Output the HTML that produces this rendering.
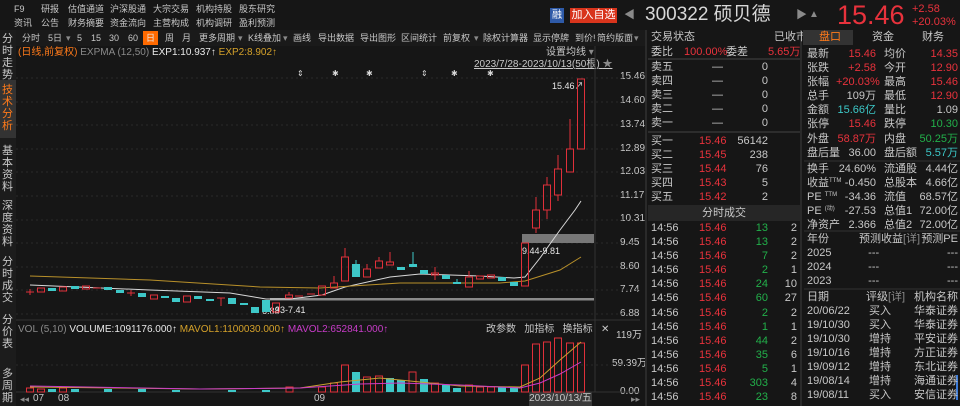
<!DOCTYPE html>
<html><head><meta charset="utf-8"><style>
*{margin:0;padding:0;box-sizing:border-box}
body{width:960px;height:406px;background:#161616;overflow:hidden;position:relative;font-family:"Liberation Sans","Noto Sans CJK SC",sans-serif;font-size:11px;color:#c8c8c8}
.a{position:absolute;white-space:nowrap;line-height:14px}
.t{position:absolute;white-space:nowrap;font-size:9px;line-height:14px;top:31px}
.h{position:absolute;white-space:nowrap;font-size:9px;line-height:12px}
.r{color:#e8323c}.g{color:#22b04a}.c{color:#3cc8c8}.o{color:#ff7a1a}.w{color:#e8e8e8}.y{color:#d4a12a}.m{color:#c83cc8}.d{color:#8a8a8a}
.rt{text-align:right}
sup{font-size:6px;line-height:0;vertical-align:4px}
</style></head><body>
<div class="h" style="left:14px;top:3px">F9</div>
<div class="h" style="left:41px;top:3px">研报</div><div class="h" style="left:68px;top:3px">估值通道</div><div class="h" style="left:110px;top:3px">沪深股通</div><div class="h" style="left:153px;top:3px">大宗交易</div><div class="h" style="left:196px;top:3px">机构持股</div><div class="h" style="left:239px;top:3px">股东研究</div>
<div class="h" style="left:14px;top:17px">资讯</div><div class="h" style="left:41px;top:17px">公告</div><div class="h" style="left:68px;top:17px">财务摘要</div><div class="h" style="left:110px;top:17px">资金流向</div><div class="h" style="left:153px;top:17px">主营构成</div><div class="h" style="left:196px;top:17px">机构调研</div><div class="h" style="left:239px;top:17px">盈利预测</div>
<div class="a" style="left:550px;top:8px;width:14px;height:15px;background:#2e5aa8;color:#fff;font-size:10px;text-align:center;line-height:15px">融</div>
<div class="a" style="left:570px;top:8px;width:47px;height:15px;background:#d8341c;color:#fff;font-size:11px;text-align:center;line-height:15px">加入自选</div>
<div class="a d" style="left:624px;top:8px;font-size:11px">◀</div>
<div class="a" style="left:645px;top:4px;font-size:19px;line-height:22px;color:#d8d8d8">300322 硕贝德</div>
<div class="a d" style="left:796px;top:8px;font-size:11px">▶</div>
<div class="a d" style="left:809px;top:8px;font-size:10px">▲</div>
<div class="a r" style="left:837px;top:0px;font-size:27px;line-height:30px">15.46</div>
<div class="a r" style="left:912px;top:2px;font-size:11px">+2.58</div>
<div class="a r" style="left:912px;top:15px;font-size:11px">+20.03%</div>
<div class="a" style="left:0;top:30px;width:16px;height:376px;background:#1c1c1c"></div>
<div class="a" style="left:2px;top:33px;width:13px;font-size:11px;line-height:12px;white-space:normal">分时走势</div>
<div class="a" style="left:0;top:80px;width:16px;height:58px;background:#333"></div>
<div class="a o" style="left:2px;top:84px;width:13px;font-size:11px;line-height:12px;white-space:normal">技术分析</div>
<div class="a" style="left:2px;top:145px;width:13px;font-size:11px;line-height:12px;white-space:normal">基本资料</div>
<div class="a" style="left:2px;top:200px;width:13px;font-size:11px;line-height:12px;white-space:normal">深度资料</div>
<div class="a" style="left:2px;top:256px;width:13px;font-size:11px;line-height:12px;white-space:normal">分时成交</div>
<div class="a" style="left:2px;top:314px;width:13px;font-size:11px;line-height:12px;white-space:normal">分价表</div>
<div class="a" style="left:2px;top:368px;width:13px;font-size:11px;line-height:12px;white-space:normal">多周期</div>
<div class="a" style="left:16px;top:30px;width:630px;height:16px;background:#1a1a1a"></div>
<div class="a" style="left:143px;top:31px;width:15px;height:14px;background:#ff6a00"></div>
<div class="t" style="left:22px">分时</div><div class="t" style="left:48px">5日</div><div class="t d" style="left:66px">▾</div><div class="t" style="left:77px">5</div><div class="t" style="left:91px">15</div><div class="t" style="left:109px">30</div><div class="t" style="left:128px">60</div><div class="t w" style="left:146px">日</div><div class="t" style="left:165px">周</div><div class="t" style="left:182px">月</div><div class="t" style="left:199px">更多周期</div><div class="t d" style="left:238px">▾</div><div class="t" style="left:248px">K线叠加</div><div class="t d" style="left:283px">▾</div><div class="t" style="left:293px">画线</div><div class="t" style="left:318px">导出数据</div><div class="t" style="left:360px">导出图形</div><div class="t" style="left:401px">区间统计</div><div class="t" style="left:443px">前复权</div><div class="t d" style="left:474px">▾</div><div class="t" style="left:483px">除权计算器</div><div class="t" style="left:533px">显示停牌</div><div class="t" style="left:575px">到价!</div><div class="t" style="left:597px">简约版面</div><div class="t d" style="left:634px">▾</div>
<div class="a" style="left:18px;top:46px;font-size:10px"><span class="o">(日线,前复权)</span> <span class="d">EXPMA (12,50)</span> <span class="w">EXP1:10.937↑</span> <span class="y">EXP2:8.902↑</span></div>
<div class="a" style="left:546px;top:46px;font-size:10px">设置均线 <span class="d">▾</span></div>
<div class="a" style="left:474px;top:58px;font-size:10px;text-decoration:underline">2023/7/28-2023/10/13(50根) <span class="d">★</span></div>
<div class="a w" style="left:552px;top:79px;font-size:9px">15.46↗</div>
<div class="a w" style="left:522px;top:244px;font-size:9px">9.44-9.81</div>
<div class="a w" style="left:262px;top:304px;font-size:9px">6.88</div>
<div class="a w" style="left:275px;top:303px;font-size:9px">33-7.41</div>
<div class="a" style="left:620px;top:71px;font-size:10px;line-height:12px">15.46</div>
<div class="a" style="left:620px;top:95px;font-size:10px;line-height:12px">14.60</div>
<div class="a" style="left:620px;top:119px;font-size:10px;line-height:12px">13.74</div>
<div class="a" style="left:620px;top:143px;font-size:10px;line-height:12px">12.89</div>
<div class="a" style="left:620px;top:166px;font-size:10px;line-height:12px">12.03</div>
<div class="a" style="left:620px;top:190px;font-size:10px;line-height:12px">11.17</div>
<div class="a" style="left:620px;top:213px;font-size:10px;line-height:12px">10.31</div>
<div class="a" style="left:620px;top:237px;font-size:10px;line-height:12px">9.45</div>
<div class="a" style="left:620px;top:261px;font-size:10px;line-height:12px">8.60</div>
<div class="a" style="left:620px;top:284px;font-size:10px;line-height:12px">7.74</div>
<div class="a" style="left:620px;top:308px;font-size:10px;line-height:12px">6.88</div>
<div class="a" style="left:616px;top:330px;font-size:10px;line-height:12px">119万</div>
<div class="a" style="left:612px;top:358px;font-size:10px;line-height:12px">59.39万</div>
<div class="a" style="left:620px;top:386px;font-size:10px;line-height:12px">0.00</div>
<div class="a" style="left:18px;top:323px;font-size:10px"><span class="d">VOL (5,10)</span> <span class="w">VOLUME:1091176.000↑</span> <span class="y">MAVOL1:1100030.000↑</span> <span class="m">MAVOL2:652841.000↑</span></div>
<div class="a" style="left:486px;top:323px;font-size:10px">改参数&nbsp;&nbsp;&nbsp;加指标&nbsp;&nbsp;&nbsp;换指标&nbsp;&nbsp;&nbsp;✕</div>
<div class="a d" style="left:20px;top:392px;font-size:9px">◂◂</div>
<div class="a" style="left:33px;top:392px;font-size:10px">07&nbsp;&nbsp;&nbsp;&nbsp;&nbsp;08</div>
<div class="a" style="left:314px;top:392px;font-size:10px">09</div>
<div class="a" style="left:529px;top:392px;width:63px;height:14px;background:#3a3a3a;font-size:10px;text-align:center">2023/10/13/五</div>
<div class="a d" style="left:631px;top:392px;font-size:9px">▸▸</div>
<svg class="a" style="left:0;top:0" width="960" height="406">
<g stroke="#2a2a2a" stroke-dasharray="2,3" stroke-width="1">
<line x1="16" y1="78" x2="640" y2="78"/><line x1="16" y1="102" x2="640" y2="102"/><line x1="16" y1="125" x2="640" y2="125"/><line x1="16" y1="149" x2="640" y2="149"/><line x1="16" y1="172" x2="640" y2="172"/><line x1="16" y1="196" x2="640" y2="196"/><line x1="16" y1="220" x2="640" y2="220"/><line x1="16" y1="243" x2="640" y2="243"/><line x1="16" y1="267" x2="640" y2="267"/><line x1="16" y1="290" x2="640" y2="290"/><line x1="16" y1="314" x2="640" y2="314"/><line x1="16" y1="365" x2="640" y2="365"/>
</g>
<line x1="595" y1="46" x2="595" y2="392" stroke="#333"/>
<line x1="16" y1="320" x2="640" y2="320" stroke="#333"/>
<line x1="16" y1="392" x2="640" y2="392" stroke="#333"/>
<line x1="646" y1="30" x2="646" y2="406" stroke="#2a2a2a" stroke-width="2"/>
<line x1="801" y1="30" x2="801" y2="406" stroke="#2a2a2a" stroke-width="2"/>
<rect x="270" y="298" width="324" height="2.5" fill="#8a8a8a"/>
<rect x="522" y="234" width="72" height="9" fill="#777"/>
<g fill="#d8d8d8" font-size="8"><text x="297" y="76">⇕</text><text x="332" y="76">✱</text><text x="366" y="76">✱</text><text x="421" y="76">⇕</text><text x="451" y="76">✱</text><text x="487" y="76">✱</text></g>
<polyline fill="none" stroke="#d8d8d8" stroke-width="1" points="30,285 150,290 230,293 266,299 290,299 322,295 345,287 390,277 420,274 480,276 514,278 525,277 540,258 560,230 575,210 581,201"/>
<polyline fill="none" stroke="#b8902a" stroke-width="1" points="30,276 150,280 260,287 320,288 400,283 500,283 525,281 560,270 581,257"/>
<g stroke="#e0303a" fill="none" stroke-width="1">
<line x1="26" y1="292" x2="34" y2="292"/><line x1="30" y1="289" x2="30" y2="295"/>
<rect x="37.5" y="288" width="7" height="4"/><rect x="59.5" y="287" width="7" height="4"/><rect x="82.5" y="286" width="7" height="3"/>
<line x1="93" y1="288" x2="101" y2="288"/><line x1="127" y1="293" x2="135" y2="293"/><line x1="131" y1="290" x2="131" y2="296"/>
<rect x="150.5" y="295" width="7" height="4"/><rect x="183.5" y="296" width="7" height="6"/>
<line x1="217" y1="298" x2="225" y2="298"/><line x1="221" y1="298" x2="221" y2="306"/>
<rect x="272.5" y="303" width="7" height="9"/><rect x="285.5" y="295" width="7" height="3"/><line x1="289" y1="292" x2="289" y2="295"/>
<line x1="295" y1="296" x2="303" y2="296"/><line x1="307" y1="294" x2="315" y2="294"/>
<rect x="318.5" y="286" width="7" height="9"/><rect x="330.5" y="283" width="7" height="5"/><line x1="334" y1="276" x2="334" y2="283"/>
<rect x="341.5" y="257" width="7" height="24"/><line x1="345" y1="248" x2="345" y2="257"/>
<rect x="363.5" y="269" width="7" height="8"/><line x1="367" y1="264" x2="367" y2="269"/>
<rect x="375.5" y="261" width="7" height="7"/><line x1="379" y1="257" x2="379" y2="261"/>
<rect x="386.5" y="262" width="7" height="3"/><line x1="390" y1="252" x2="390" y2="262"/>
<rect x="431.5" y="273" width="7" height="2"/><line x1="435" y1="267" x2="435" y2="280"/>
<rect x="465.5" y="277" width="7" height="10"/><line x1="469" y1="271" x2="469" y2="277"/>
<rect x="476.5" y="276" width="7" height="3"/><rect x="487.5" y="275" width="7" height="3"/>
<rect x="521.5" y="243" width="7" height="43"/>
<rect x="532.5" y="210" width="7" height="18"/><line x1="536" y1="197" x2="536" y2="210"/><line x1="536" y1="228" x2="536" y2="233"/>
<rect x="543.5" y="185" width="7" height="25"/><line x1="547" y1="177" x2="547" y2="185"/><line x1="547" y1="210" x2="547" y2="219"/>
<rect x="554.5" y="169" width="7" height="26"/><line x1="558" y1="155" x2="558" y2="169"/><line x1="558" y1="195" x2="558" y2="201"/>
<rect x="566.5" y="149" width="7" height="23"/><line x1="570" y1="119" x2="570" y2="149"/>
<rect x="577.5" y="79" width="7" height="70"/>
</g>
<g fill="#3ec8c8">
<rect x="48" y="288" width="8" height="3"/><rect x="71" y="286" width="8" height="3"/><rect x="104" y="287" width="8" height="3"/><rect x="116" y="290" width="8" height="3"/><rect x="138" y="293" width="8" height="4"/><rect x="161" y="296" width="8" height="2"/><rect x="172" y="298" width="8" height="4"/><rect x="194" y="296" width="8" height="3"/><rect x="206" y="299" width="8" height="2"/><rect x="228" y="298" width="8" height="6"/><rect x="240" y="303" width="8" height="2"/><rect x="251" y="307" width="8" height="6"/><rect x="262" y="300" width="8" height="12"/>
<rect x="352" y="264" width="8" height="13"/><rect x="397" y="267" width="8" height="3"/><rect x="409" y="264" width="8" height="3"/><rect x="420" y="270" width="8" height="4"/><rect x="442" y="275" width="8" height="4"/><rect x="453" y="282" width="8" height="2"/><rect x="498" y="277" width="8" height="4"/><rect x="510" y="282" width="8" height="4"/>
</g>
<g stroke="#3ec8c8"><line x1="356" y1="260" x2="356" y2="264"/><line x1="413" y1="252" x2="413" y2="264"/><line x1="457" y1="279" x2="457" y2="282"/></g>
<g fill="#3ec8c8"><rect x="48" y="389" width="8" height="3"/><rect x="71" y="389" width="8" height="3"/><rect x="104" y="389" width="8" height="3"/><rect x="138" y="389" width="8" height="3"/><rect x="172" y="390" width="8" height="2"/><rect x="228" y="390" width="8" height="2"/><rect x="262" y="390" width="8" height="2"/><rect x="352" y="372" width="8" height="20"/><rect x="386" y="378" width="8" height="14"/><rect x="397" y="380" width="8" height="12"/><rect x="420" y="379" width="8" height="13"/><rect x="442" y="385" width="8" height="7"/><rect x="453" y="388" width="8" height="4"/><rect x="498" y="387" width="8" height="5"/><rect x="510" y="387" width="8" height="5"/></g>
<g stroke="#e0303a" fill="none"><rect x="26.5" y="388" width="7" height="4"/><rect x="37.5" y="389" width="7" height="3"/><rect x="59.5" y="388" width="7" height="4"/><rect x="286" y="387" width="7" height="5"/><rect x="318.5" y="387" width="7" height="5"/><rect x="330.5" y="383" width="7" height="9"/><rect x="341.5" y="365" width="7" height="27"/><rect x="363.5" y="377" width="7" height="15"/><rect x="375.5" y="376" width="7" height="16"/><rect x="409" y="372" width="7" height="20"/><rect x="431.5" y="383" width="7" height="9"/><rect x="465.5" y="385" width="7" height="7"/><rect x="476.5" y="387" width="7" height="5"/><rect x="487.5" y="387" width="7" height="5"/><rect x="521.5" y="365" width="7" height="27"/><rect x="532.5" y="344" width="7" height="48"/><rect x="543.5" y="342" width="7" height="50"/><rect x="554.5" y="338" width="7" height="54"/><rect x="566.5" y="343" width="7" height="49"/><rect x="577.5" y="343" width="7" height="49"/></g>
<polyline fill="none" stroke="#c8a030" points="30,387 200,389 300,388 340,382 380,378 410,381 460,386 520,387 540,378 560,360 581,342"/>
<polyline fill="none" stroke="#c83cc8" points="30,386 200,389 300,388 360,384 400,383 460,385 520,388 540,383 560,374 581,362"/>
<line x1="648" y1="59" x2="800" y2="59" stroke="#444"/>
<line x1="648" y1="132" x2="800" y2="132" stroke="#444"/>
<line x1="804" y1="161" x2="960" y2="161" stroke="#333"/>
<line x1="804" y1="231" x2="960" y2="231" stroke="#333"/>
<line x1="804" y1="289" x2="960" y2="289" stroke="#333"/>
<rect x="956" y="375" width="2" height="25" fill="#3a7ad8"/>
</svg>
<div class="a" style="left:651px;top:30px">交易状态</div><div class="a" style="left:774px;top:30px">已收市</div>
<div class="a" style="left:651px;top:45px">委比</div><div class="a r" style="left:684px;top:45px">100.00%</div><div class="a" style="left:726px;top:45px">委差</div><div class="a r" style="left:768px;top:45px">5.65万</div>
<div class="a" style="left:651px;top:60px;line-height:14px">卖五<br>卖四<br>卖三<br>卖二<br>卖一</div>
<div class="a" style="left:712px;top:60px;line-height:14px">—<br>—<br>—<br>—<br>—</div>
<div class="a rt" style="left:740px;top:60px;width:28px;line-height:14px">0<br>0<br>0<br>0<br>0</div>
<div class="a" style="left:651px;top:134px;line-height:14px">买一<br>买二<br>买三<br>买四<br>买五</div>
<div class="a r" style="left:699px;top:134px;line-height:14px">15.46<br>15.45<br>15.44<br>15.43<br>15.42</div>
<div class="a rt" style="left:730px;top:134px;width:38px;line-height:14px">56142<br>238<br>76<br>5<br>2</div>
<div class="a" style="left:648px;top:205px;width:152px;height:16px;background:#262626;text-align:center;line-height:16px">分时成交</div>
<div class="a" style="left:651px;top:221px;line-height:14.1px">14:56<br>14:56<br>14:56<br>14:56<br>14:56<br>14:56<br>14:56<br>14:56<br>14:56<br>14:56<br>14:56<br>14:56<br>14:56</div>
<div class="a r" style="left:699px;top:221px;line-height:14.1px">15.46<br>15.46<br>15.46<br>15.46<br>15.46<br>15.46<br>15.46<br>15.46<br>15.46<br>15.46<br>15.46<br>15.46<br>15.46</div>
<div class="a g rt" style="left:740px;top:221px;width:28px;line-height:14.1px">13<br>13<br>7<br>2<br>24<br>60<br>2<br>1<br>44<br>35<br>5<br>303<br>23</div>
<div class="a rt" style="left:775px;top:221px;width:22px;line-height:14.1px">2<br>2<br>2<br>1<br>10<br>27<br>2<br>1<br>2<br>6<br>1<br>4<br>8</div>
<div class="a" style="left:803px;top:30px;width:50px;height:15px;background:#333"></div>
<div class="a o" style="left:819px;top:30px">盘口</div><div class="a" style="left:872px;top:30px">资金</div><div class="a" style="left:922px;top:30px">财务</div>
<div class="a" style="left:807px;top:47px;line-height:14.1px">最新<br>张跌<br>张幅<br>总手<br>金额<br>张停<br>外盘<br>盘后量</div>
<div class="a rt" style="left:836px;top:47px;width:40px;line-height:14.1px"><span class="r">15.46</span><br><span class="r">+2.58</span><br><span class="r">+20.03%</span><br>109万<br><span class="c">15.66亿</span><br><span class="r">15.46</span><br><span class="r">58.87万</span><br>36.00</div>
<div class="a" style="left:884px;top:47px;line-height:14.1px">均价<br>今开<br>最高<br>最低<br>量比<br>跌停<br>内盘<br>盘后额</div>
<div class="a rt" style="left:916px;top:47px;width:42px;line-height:14.1px"><span class="r">14.35</span><br><span class="r">12.90</span><br><span class="r">15.46</span><br><span class="r">12.90</span><br>1.09<br><span class="g">10.30</span><br><span class="g">50.25万</span><br><span class="c">5.57万</span></div>
<div class="a" style="left:807px;top:162px;line-height:14px">换手<br>收益<sup>TTM</sup><br>PE <sup>TTM</sup><br>PE <sup>(动)</sup><br>净资产</div>
<div class="a rt" style="left:836px;top:162px;width:40px;line-height:14px">24.60%<br>-0.450<br>-34.36<br>-27.53<br>2.366</div>
<div class="a" style="left:884px;top:162px;line-height:14px">流通股<br>总股本<br>流值<br>总值1<br>总值2</div>
<div class="a rt" style="left:916px;top:162px;width:42px;line-height:14px">4.44亿<br>4.66亿<br>68.57亿<br>72.00亿<br>72.00亿</div>
<div class="a" style="left:807px;top:232px;line-height:14px">年份<br>2025<br>2024<br>2023</div>
<div class="a" style="left:859px;top:232px;line-height:14px">预测收益<span class="d">[详]</span><br>&nbsp;&nbsp;&nbsp;---<br>&nbsp;&nbsp;&nbsp;---<br>&nbsp;&nbsp;&nbsp;---</div>
<div class="a rt" style="left:910px;top:232px;width:48px;line-height:14px">预测PE<br>---<br>---<br>---</div>
<div class="a" style="left:807px;top:290px;line-height:14px">日期<br>20/06/22<br>19/10/30<br>19/10/30<br>19/10/16<br>19/09/12<br>19/08/14<br>19/08/11</div>
<div class="a" style="left:866px;top:290px;line-height:14px">评级<span class="d">[详]</span><br>&nbsp;买入<br>&nbsp;买入<br>&nbsp;增持<br>&nbsp;增持<br>&nbsp;增持<br>&nbsp;增持<br>&nbsp;买入</div>
<div class="a rt" style="left:905px;top:290px;width:53px;line-height:14px">机构名称<br>华泰证券<br>华泰证券<br>平安证券<br>方正证券<br>东北证券<br>海通证券<br>安信证券</div>
</body></html>
